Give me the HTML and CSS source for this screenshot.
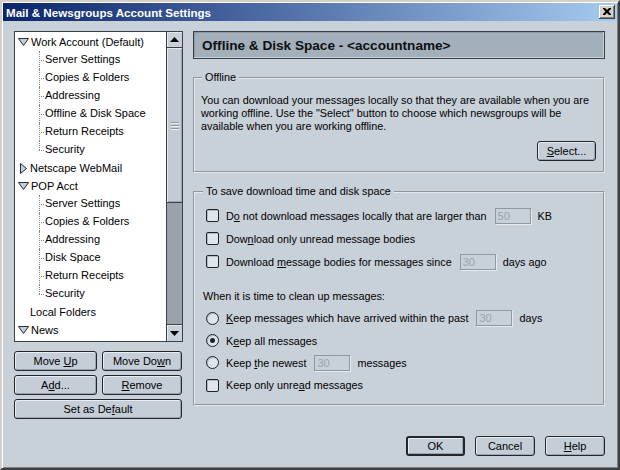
FILE: index.html
```html
<!DOCTYPE html>
<html>
<head>
<meta charset="utf-8">
<title>Mail &amp; Newsgroups Account Settings</title>
<link rel="stylesheet" href="styles.css">
</head>
<body>
<div class="window">
  <div class="titlebar">
    <span class="title">Mail &amp; Newsgroups Account Settings</span>
    <span class="close"><svg width="8" height="7" viewBox="0 0 8 7"><path d="M0 0h2l2 2 2-2h2v1l-2.5 2.5 2.5 2.5v1h-2l-2-2-2 2h-2v-1l2.5-2.5-2.5-2.5z" fill="#000"/></svg></span>
  </div>
  <div class="content">
    <div class="main">
      <div class="left">
        <div class="tree">
          <ul class="tree-list">
            <li>
              <div class="row"><svg class="twisty" width="11" height="8" viewBox="0 0 11 8"><path d="M0.5 0.5h10l-5 7z" fill="#c5cdd6" stroke="#262c33"/></svg><span>Work Account (Default)</span></div>
              <ul class="children">
                <li>Server Settings</li>
                <li>Copies &amp; Folders</li>
                <li>Addressing</li>
                <li>Offline &amp; Disk Space</li>
                <li>Return Receipts</li>
                <li>Security</li>
              </ul>
            </li>
            <li>
              <div class="row"><svg class="twisty-r" width="7" height="11" viewBox="0 0 7 11"><path d="M0.5 0.5l6 5-6 5z" fill="#c5cdd6" stroke="#262c33"/></svg><span>Netscape WebMail</span></div>
            </li>
            <li>
              <div class="row"><svg class="twisty" width="11" height="8" viewBox="0 0 11 8"><path d="M0.5 0.5h10l-5 7z" fill="#c5cdd6" stroke="#262c33"/></svg><span>POP Acct</span></div>
              <ul class="children">
                <li>Server Settings</li>
                <li>Copies &amp; Folders</li>
                <li>Addressing</li>
                <li>Disk Space</li>
                <li>Return Receipts</li>
                <li>Security</li>
              </ul>
            </li>
            <li>
              <div class="row plain"><span>Local Folders</span></div>
            </li>
            <li>
              <div class="row"><svg class="twisty" width="11" height="8" viewBox="0 0 11 8"><path d="M0.5 0.5h10l-5 7z" fill="#c5cdd6" stroke="#262c33"/></svg><span>News</span></div>
            </li>
          </ul>
          <div class="scrollbar">
            <div class="sb-btn up"><svg width="9" height="5" viewBox="0 0 9 5"><path d="M0 5L4.5 0 9 5z" fill="#000"/></svg></div>
            <div class="sb-thumb"><div class="grip"></div><div class="grip"></div><div class="grip"></div></div>
            <div class="sb-track"></div>
            <div class="sb-btn down"><svg width="9" height="5" viewBox="0 0 9 5"><path d="M0 0h9L4.5 5z" fill="#000"/></svg></div>
          </div>
        </div>
        <div class="btn-grid">
          <button class="btn">Move <u>U</u>p</button>
          <button class="btn">Move Do<u>w</u>n</button>
          <button class="btn">A<u>d</u>d...</button>
          <button class="btn"><u>R</u>emove</button>
          <button class="btn wide">Set as De<u>f</u>ault</button>
        </div>
      </div>
      <div class="right">
        <div class="header">Offline &amp; Disk Space - &lt;accountname&gt;</div>
        <fieldset class="group offline">
          <legend>Offline</legend>
          <p class="desc">You can download your messages locally so that they are available when you are<br>working offline. Use the "Select" button to choose which newsgroups will be<br>available when you are working offline.</p>
          <div class="select-row"><button class="btn select"><u>S</u>elect...</button></div>
        </fieldset>
        <fieldset class="group save">
          <legend>To save download time and disk space</legend>
          <div class="opt"><span class="check"></span><span class="lbl">D<u>o</u> not download messages locally that are larger than</span><input class="field" disabled value="50"><span class="unit">KB</span></div>
          <div class="opt"><span class="check"></span><span class="lbl">Dow<u>n</u>load only unread message bodies</span></div>
          <div class="opt"><span class="check"></span><span class="lbl">Download <u>m</u>essage bodies for messages since</span><input class="field" disabled value="30"><span class="unit">days ago</span></div>
          <div class="sub">When it is time to clean up messages:</div>
          <div class="opt r"><span class="radio"></span><span class="lbl"><u>K</u>eep messages which have arrived within the past</span><input class="field" disabled value="30"><span class="unit">days</span></div>
          <div class="opt r"><span class="radio on"></span><span class="lbl">K<u>e</u>ep all messages</span></div>
          <div class="opt r"><span class="radio"></span><span class="lbl">Keep <u>t</u>he newest</span><input class="field" disabled value="30"><span class="unit">messages</span></div>
          <div class="opt r"><span class="check"></span><span class="lbl">Keep only unre<u>a</u>d messages</span></div>
        </fieldset>
      </div>
    </div>
    <div class="footer">
      <button class="btn ok">OK</button>
      <button class="btn">Cancel</button>
      <button class="btn"><u>H</u>elp</button>
    </div>
  </div>
</div>
</body>
</html>
```
FILE: styles.css
```css
* { box-sizing: border-box; }
html, body { margin: 0; padding: 0; }
body {
  font-family: "Liberation Sans", Arial, sans-serif;
  font-size: 11px;
  color: #000;
  background: #d4d0c8;
}
.window {
  width: 620px;
  height: 470px;
  padding: 1px;
  border: 2px solid;
  border-color: #d4d0c8 #404040 #404040 #d4d0c8;
  box-shadow: inset 1px 1px 0 #fff, inset -1px -1px 0 #808080;
  background: #d4d0c8;
  display: flex;
  flex-direction: column;
}
.titlebar {
  height: 18px;
  flex: none;
  display: flex;
  align-items: center;
  padding: 0 2px 0 3px;
  background: linear-gradient(to right, #0a246a, #a6caf0);
  color: #fff;
  font-weight: bold;
  font-size: 11.6px;
}
.close {
  margin-left: auto;
  width: 16px;
  height: 14px;
  background: #d4d0c8;
  box-shadow: inset -1px -1px 0 #404040, inset 1px 1px 0 #fff, inset -2px -2px 0 #808080;
  display: flex;
  align-items: center;
  justify-content: center;
  padding: 0 1px 1px 0;
}
.content {
  flex: 1;
  background: #c8d0d8;
  padding: 10px 12px 11px 11px;
  display: flex;
  flex-direction: column;
}
.main {
  display: grid;
  grid-template-columns: 169px 412px;
  column-gap: 10px;
}
.left { display: flex; flex-direction: column; }
.tree {
  height: 311px;
  border: 1px solid #3a4149;
  background: #fff;
  display: flex;
}
.tree-list, .children { list-style: none; margin: 0; padding: 0; }
.tree-list { flex: 1; padding: 1px 0 0 3px; }
.row {
  height: 18px;
  display: flex;
  align-items: center;
  white-space: nowrap;
}
.row .twisty { margin-right: 2px; }
.row .twisty-r { margin: 0 3px 0 2px; }
.row.plain { padding-left: 12px; }
.children { margin-left: 21px; }
.children li {
  position: relative;
  height: 18px;
  line-height: 17px;
  padding-left: 6px;
  white-space: nowrap;
}
.children li::before {
  content: "";
  position: absolute;
  left: 0;
  top: 9px;
  width: 5px;
  border-top: 1px dotted #7d858d;
}
.children li::after {
  content: "";
  position: absolute;
  left: 0;
  top: 0;
  height: 18px;
  border-left: 1px dotted #7d858d;
}
.children li:last-child::after { height: 9px; }
.scrollbar {
  width: 16px;
  flex: none;
  border-left: 1px solid #3a4149;
  display: flex;
  flex-direction: column;
  background: #9aa3ac;
}
.sb-btn {
  height: 16px;
  background: #c8d0d8;
  display: flex;
  align-items: center;
  justify-content: center;
  box-shadow: inset 1px 1px 0 #e4e9ee;
}
.sb-btn.up { border-bottom: 1px solid #3a4149; }
.sb-btn.down { border-top: 1px solid #3a4149; height: 17px; }
.sb-thumb {
  height: 155px;
  background: #c3ccd5;
  border-bottom: 1px solid #3a4149;
  box-shadow: inset 1px 1px 0 #e4e9ee, inset -1px -1px 0 #9aa3ac;
  display: flex;
  flex-direction: column;
  align-items: center;
  justify-content: center;
  gap: 2px;
}
.grip {
  width: 8px;
  height: 1px;
  background: #8d969f;
  box-shadow: 0 1px 0 #eef2f5;
}
.sb-track { flex: 1; }
.btn-grid {
  margin-top: 9px;
  display: grid;
  grid-template-columns: 83px 80px;
  column-gap: 5px;
  row-gap: 4px;
}
.btn-grid .wide { grid-column: 1 / 3; }
.btn {
  height: 20px;
  margin: 0;
  padding: 0;
  border: 1px solid #23272c;
  border-radius: 3px;
  background: #c5ced7;
  box-shadow: inset 1px 1px 0 #e8edf2, inset -1px -1px 0 #9ca6b0;
  font-family: "Liberation Sans", Arial, sans-serif;
  font-size: 11px;
  color: #000;
}
.right { display: flex; flex-direction: column; }
.header {
  height: 28px;
  border: 1px solid #3a4149;
  box-shadow: inset -1px -1px 0 #c8d0d8, inset 1px 1px 0 #8a96a2;
  background: #a3afbb;
  display: flex;
  align-items: center;
  padding-left: 8px;
  font-weight: bold;
  font-size: 13.6px;
  color: #0c0f12;
}
.group {
  margin: 12px 0 0;
  border: 2px groove #e2e8ee;
  min-width: 0;
  font-size: 10.8px;
}
.group legend {
  padding: 0 3px;
  margin-left: 1px;
  line-height: 13px;
}
.offline { padding: 10px 7px 10px 6px; }
.desc {
  margin: 0;
  line-height: 13px;
  white-space: nowrap;
}
.select-row {
  display: flex;
  justify-content: flex-end;
  margin-top: 8px;
}
.btn.select { width: 59px; }
.save { padding: 6px 7px 7px 7px; }
.opt {
  display: flex;
  align-items: center;
  height: 23px;
  padding-left: 4px;
  white-space: nowrap;
}
.opt.r { height: 22.4px; }
.check {
  width: 13px;
  height: 13px;
  border: 1px solid #1c2228;
  border-radius: 2px;
  background: #dfe5eb;
  box-shadow: inset 1px 1px 0 #b4bdc6;
  margin-right: 7px;
  flex: none;
}
.radio {
  width: 13px;
  height: 13px;
  border: 1px solid #1c2228;
  border-radius: 50%;
  background: #dfe5eb;
  box-shadow: inset 1px 1px 0 #b4bdc6;
  margin-right: 7px;
  flex: none;
  display: flex;
  align-items: center;
  justify-content: center;
}
.radio.on::after {
  content: "";
  width: 5px;
  height: 5px;
  border-radius: 50%;
  background: #1c2228;
}
.field {
  width: 36px;
  height: 16px;
  margin: 0 7px 0 8px;
  padding: 0 2px;
  border: 1px solid #8e98a2;
  box-shadow: 1px 1px 0 #e6ebf0;
  background: #c8d0d8;
  color: #9aa3ac;
  font-family: "Liberation Sans", Arial, sans-serif;
  font-size: 11px;
}
.sub {
  margin-top: 17px;
  margin-bottom: 4px;
  height: 13px;
  line-height: 13px;
  padding-left: 1px;
}
.footer {
  margin-top: auto;
  display: flex;
  justify-content: flex-end;
  gap: 10px;
}
.footer .btn { width: 60px; }
.footer .btn.ok { width: 59px; border-width: 2px; }
```
